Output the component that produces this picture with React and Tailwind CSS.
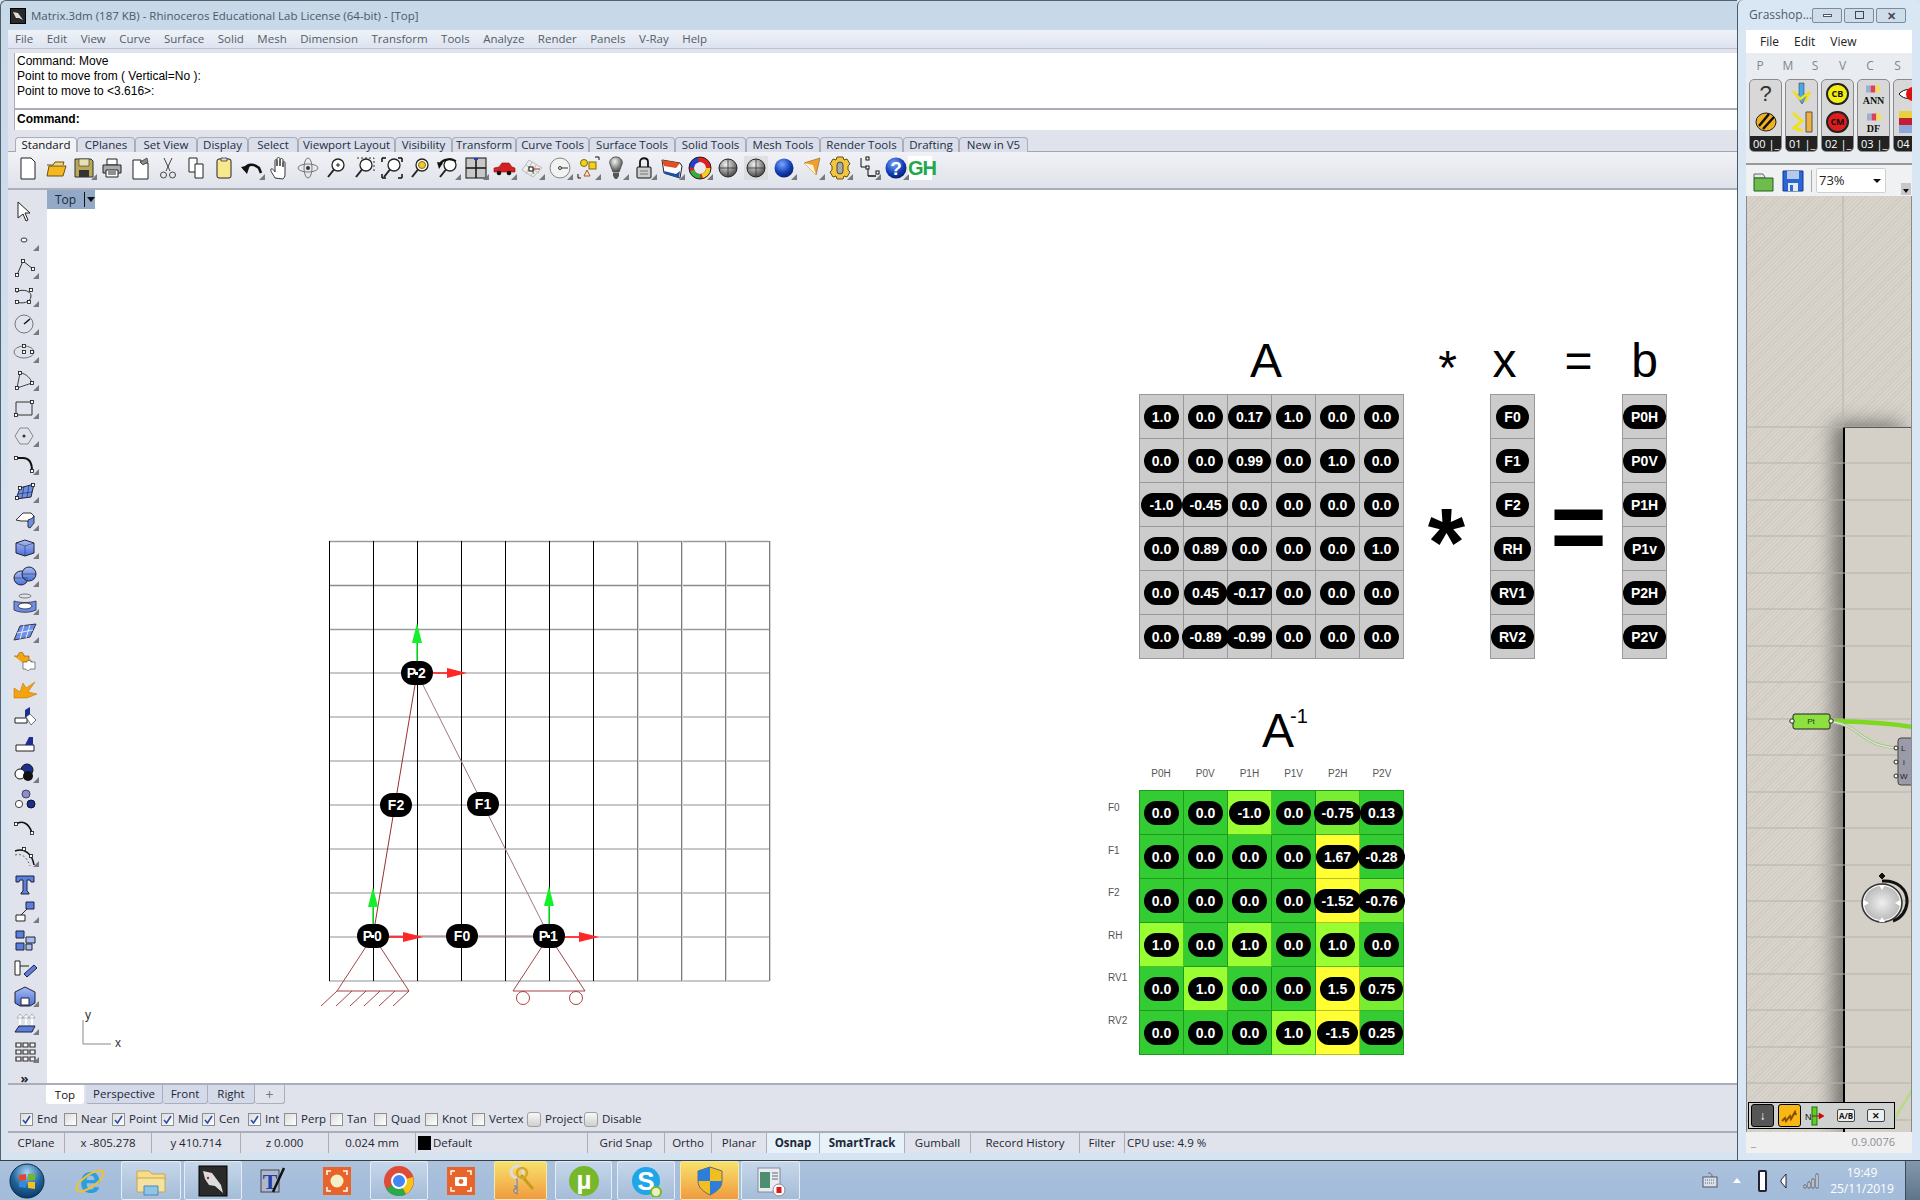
import React from "react";

const S = ({ children, size = 24, vb }) => (
  <svg width={size} height={size} viewBox={vb || `0 0 ${size} ${size}`} className="block shrink-0">
    {children}
  </svg>
);

const Corner = () => (
  <span className="absolute right-[1px] bottom-[3px] w-0 h-0 border-l-[6px] border-l-transparent border-b-[6px] border-b-[#77797d]" />
);

const Defs = () => (
  <svg width="0" height="0" className="absolute">
    <defs>
      <radialGradient id="gray" cx="40%" cy="30%" r="75%">
        <stop offset="0" stopColor="#f4f4f4" />
        <stop offset="1" stopColor="#3d3d3d" />
      </radialGradient>
      <radialGradient id="blue" cx="40%" cy="30%" r="75%">
        <stop offset="0" stopColor="#7ea6ff" />
        <stop offset="0.6" stopColor="#1240b8" />
        <stop offset="1" stopColor="#041a66" />
      </radialGradient>
      <radialGradient id="orb" cx="50%" cy="25%" r="80%">
        <stop offset="0" stopColor="#a8d4f4" />
        <stop offset="0.55" stopColor="#20649c" />
        <stop offset="1" stopColor="#0c3458" />
      </radialGradient>
      <radialGradient id="dial" cx="50%" cy="50%" r="60%">
        <stop offset="0" stopColor="#efefef" />
        <stop offset="1" stopColor="#a9a9a9" />
      </radialGradient>
      <linearGradient id="solid" x1="0" y1="0" x2="0" y2="1">
        <stop offset="0" stopColor="#a9bdf4" />
        <stop offset="1" stopColor="#4a6fd8" />
      </linearGradient>
    </defs>
  </svg>
);

// top toolbar drawings, [icon, has fly-out corner]
const magnifier = (
  <>
    <circle cx="14" cy="9" r="6" fill="#fff" stroke="#222" strokeWidth="1.3" />
    <path d="M10 13.5L4 21" stroke="#222" strokeWidth="2" />
  </>
);
const sphereLines = (
  <>
    <circle cx="12" cy="12" r="9" fill="url(#gray)" stroke="#222" />
    <path d="M3 12h18M12 3v18" stroke="#333" strokeWidth="0.8" />
  </>
);

const topIcons = [
  [<S><path d="M5 2h10l4 4v17H5z" fill="#fff" stroke="#222" /></S>, 0],
  [<S><path d="M3 9h6l2-3h9l-1 3" fill="#f6d76a" stroke="#6d5310" /><path d="M3 20l2-10h17l-3 10z" fill="#f3b81f" stroke="#6d5310" /></S>, 0],
  [<S><path d="M3 3h16l2 2v16H3z" fill="#b8a85a" stroke="#333" /><path d="M7 3h10v7H7z" fill="#e8e0b0" stroke="#333" strokeWidth=".6" /><path d="M7 14h10v7H7z" fill="#333" /></S>, 1],
  [<S><path d="M7 3h10v6H7z" fill="#fff" stroke="#222" /><path d="M3 9h18v8H3z" fill="#aaa" stroke="#222" /><path d="M6 14h12v7H6z" fill="#fff" stroke="#222" /><path d="M8 16h8M8 18h8" stroke="#222" /></S>, 0],
  [<S><path d="M5 4h8v3h7v16H5z" fill="#fff" stroke="#222" /><path d="M12 6l7-4 1 4-5 3z" fill="#888" stroke="#222" strokeWidth=".6" /></S>, 0],
  [<S><path d="M8 2l6 13M16 2l-6 13" stroke="#444" /><circle cx="7.5" cy="19" r="3" fill="none" stroke="#444" /><circle cx="16.5" cy="19" r="3" fill="none" stroke="#444" /></S>, 0],
  [<S><path d="M5 2h8v14H5z" fill="#fff" stroke="#222" /><path d="M11 8h8v14h-8z" fill="#fff" stroke="#222" /></S>, 0],
  [<S><rect x="5" y="3" width="14" height="19" rx="2" fill="#f7e98c" stroke="#222" /><path d="M9 2h6v3H9z" fill="#ddd" stroke="#222" strokeWidth=".7" /></S>, 0],
  [<S><path d="M4 14c3-6 9-7 15-2l2 5" fill="none" stroke="#111" strokeWidth="2.6" /><path d="M1 11l9-2-3 9z" fill="#111" /></S>, 1],
  [<S><path d="M7 22c-2-4-5-7-4-9 2-1 3 2 4 3V5c0-2 2-2 2 0v5-7c0-2 3-2 3 0v7-6c0-2 3-2 3 0v7-4c0-2 2-2 2 0v11c0 3-1 4-2 5z" fill="#fff" stroke="#333" /></S>, 0],
  [<S><ellipse cx="12" cy="12" rx="10" ry="4" fill="none" stroke="#777" /><ellipse cx="12" cy="12" rx="4" ry="10" fill="none" stroke="#777" /><circle cx="12" cy="12" r="2" fill="#333" /></S>, 0],
  [<S>{magnifier}<path d="M12 9h4M14 7v4" stroke="#222" /></S>, 0],
  [<S><path d="M5 2h17v15" fill="none" stroke="#333" strokeDasharray="2 2" />{magnifier}</S>, 0],
  [<S>{magnifier}<path d="M2 2h4M2 2v4M22 2h-4M22 2v4M2 22h4M2 22v-4M22 22h-4M22 22v-4" stroke="#111" strokeWidth="1.5" fill="none" /></S>, 0],
  [<S>{magnifier}<circle cx="14" cy="9" r="3.5" fill="#f0c830" stroke="#8a7010" /></S>, 0],
  [<S>{magnifier}<path d="M3 10c2-6 10-9 17-5" fill="none" stroke="#111" strokeWidth="2" /><path d="M1 6l6 1-4 6z" fill="#111" /></S>, 1],
  [<S><rect x="2" y="2" width="20" height="20" fill="#c8c8c8" stroke="#111" /><path d="M12 2v20M2 12h20" stroke="#111" strokeWidth="1.5" /><path d="M10 2h4v2h-4z" fill="#2040c0" /></S>, 1],
  [<S><path d="M2 16v-4l5-1 3-4h7l3 4 3 1v4z" fill="#d81f1f" stroke="#801010" strokeWidth=".6" /><circle cx="7" cy="17" r="2.3" fill="#111" /><circle cx="17" cy="17" r="2.3" fill="#111" /></S>, 1],
  [<S><path d="M9 4l13 8-9 9L2 14z" fill="#eee" stroke="#bbb" /><path d="M6 9l13 8M12 6l-6 12M16 9l-5 11" stroke="#bbb" /><path d="M12 13h8" stroke="#c02020" /><path d="M12 13l2 5" stroke="#20a030" /><rect x="9" y="11" width="4" height="4" fill="#fff" stroke="#111" /></S>, 1],
  [<S><circle cx="12" cy="12" r="10" fill="#f2f2f2" stroke="#888" /><circle cx="12" cy="12" r="1.5" fill="none" stroke="#333" /><path d="M13 12h7" stroke="#333" /></S>, 1],
  [<S><circle cx="8" cy="7" r="3.5" fill="#f5d020" stroke="#806800" /><rect x="13" y="6" width="7" height="7" fill="#f5d020" stroke="#806800" /><path d="M11 14l3 6H8z" fill="#f8e8d8" stroke="#b05020" /><path d="M2 18v4h3M19 1h4v3" fill="none" stroke="#111" /></S>, 1],
  [<S><path d="M12 1c5 0 7 4 6 7l-3 8H9L6 8c-1-3 1-7 6-7z" fill="url(#gray)" stroke="#555" /><path d="M9 17h6v3l-2 3h-2l-2-3z" fill="#555" /></S>, 1],
  [<S><path d="M8 11V6c0-5 8-5 8 0v5" fill="none" stroke="#111" strokeWidth="1.8" /><rect x="5" y="11" width="14" height="11" rx="1" fill="#ccc" stroke="#111" /><path d="M8 15h8M8 18h8" stroke="#777" /></S>, 1],
  [<S><path d="M2 4l18 3 2 3-2 12-16-5z" fill="#fff" stroke="#223" /><path d="M2 4l18 3-4 5-12-2z" fill="#e05020" /><path d="M4 15l12 3 4-3-1 7-14-4z" fill="#2050a0" /></S>, 1],
  [<S><circle cx="12" cy="12" r="8.5" fill="none" stroke="#e02020" strokeWidth="5" /><circle cx="12" cy="12" r="8.5" fill="none" stroke="#f0d020" strokeWidth="5" strokeDasharray="11 43" /><circle cx="12" cy="12" r="8.5" fill="none" stroke="#30b040" strokeWidth="5" strokeDasharray="11 43" strokeDashoffset="-13" /><circle cx="12" cy="12" r="8.5" fill="none" stroke="#2040d0" strokeWidth="5" strokeDasharray="11 43" strokeDashoffset="-27" /><circle cx="12" cy="12" r="11" fill="none" stroke="#222" /></S>, 1],
  [<S>{sphereLines}</S>, 0],
  [<S><rect x="0" y="0" width="24" height="24" fill="#d6d6d6" opacity=".6" />{sphereLines}</S>, 0],
  [<S><circle cx="12" cy="12" r="9.5" fill="url(#blue)" /></S>, 1],
  [<S><path d="M4 7l16-5-4 17z" fill="#f0a030" stroke="#8a5a10" strokeWidth=".6" /><path d="M4 7l9 2 3 10z" fill="#fff3d0" /></S>, 1],
  [<S><path d="M9 1h6l1 3 3-1 3 5-2 2v4l2 2-3 5-3-1-1 3H9l-1-3-3 1-3-5 2-2v-4L2 8l3-5 3 1z" fill="#f3c640" stroke="#6a5010" /><rect x="9" y="6" width="6" height="12" rx="3" fill="#aaa" stroke="#444" /></S>, 1],
  [<S><path d="M5 2v9M5 11h7v9h8M12 20h8" fill="none" stroke="#111" /><rect x="10" y="1" width="3" height="3" fill="#fff" stroke="#111" /><rect x="10" y="10" width="3" height="3" fill="#fff" stroke="#111" /><rect x="20" y="15" width="3" height="3" fill="#fff" stroke="#111" /></S>, 1],
  [<S><circle cx="12" cy="12" r="10.5" fill="url(#blue)" /><text x="12" y="19" textAnchor="middle" fontSize="19" fontWeight="700" fill="#fff" fontFamily="Liberation Sans">?</text></S>, 1],
];

// left toolbar drawings
const dot = (x, y) => <rect x={x - 1.5} y={y - 1.5} width="3" height="3" fill="#fff" stroke="#111" strokeWidth=".8" />;
const leftIcons = [
  [<S><path d="M5 2l12 11h-5l3 7-2 1-3-7-5 4z" fill="#fff" stroke="#222" /></S>, 0],
  [<S><ellipse cx="11" cy="12" rx="3" ry="2" fill="#fff" stroke="#333" /></S>, 1],
  [<S><path d="M4 19L10 5l10 8" fill="none" stroke="#333" />{dot(4, 19)}{dot(10, 5)}{dot(20, 13)}</S>, 1],
  [<S><path d="M4 9c0-4 14-4 14 3s-10 8-14 6" fill="none" stroke="#333" />{dot(4, 6)}{dot(18, 6)}{dot(4, 18)}{dot(16, 18)}</S>, 1],
  [<S><circle cx="11" cy="12" r="9" fill="none" stroke="#777" /><path d="M11 12l6-5" stroke="#111" strokeWidth="1.5" /></S>, 1],
  [<S><ellipse cx="11" cy="12" rx="10" ry="6" fill="none" stroke="#777" />{dot(11, 6)}{dot(11, 12)}{dot(19, 12)}</S>, 1],
  [<S><path d="M4 20L7 5c6 0 11 6 12 10z" fill="none" stroke="#444" />{dot(4, 20)}{dot(7, 5)}{dot(19, 15)}</S>, 1],
  [<S><path d="M3 6h16v13H3z" fill="none" stroke="#333" />{dot(3, 19)}{dot(19, 6)}</S>, 1],
  [<S><path d="M7 4h8l5 8-5 8H7l-5-8z" fill="none" stroke="#888" /><circle cx="11" cy="12" r="1.5" fill="#333" /></S>, 1],
  [<S><path d="M3 6h7c6 0 9 4 9 13" fill="none" stroke="#111" strokeWidth="2" />{dot(3, 6)}{dot(19, 19)}</S>, 1],
  [<S><path d="M7 8l14-4-3 13-15 2z" fill="#6c8fe8" stroke="#223" /><path d="M5 14l14-2M11 6l-2 12M16 5l-2 12" stroke="#223" strokeWidth=".6" />{dot(4, 18)}{dot(7, 8)}{dot(20, 5)}</S>, 1],
  [<S><path d="M3 12l7-7h8l3 3-4 8-3-3H8z" fill="#fff" stroke="#333" /><path d="M15 12c3-1 5-2 6-4v7l-4 5-2-1z" fill="#6c8fe8" stroke="#333" /></S>, 1],
  [<S><path d="M3 7l9-3 9 3v10l-9 3-9-3z" fill="url(#solid)" stroke="#223" /><path d="M3 7l9 3 9-3M12 10v10" stroke="#223" strokeWidth=".5" fill="none" /></S>, 1],
  [<S><circle cx="8" cy="14" r="7" fill="url(#solid)" stroke="#223" /><circle cx="16" cy="10" r="7" fill="url(#solid)" stroke="#223" /><path d="M1 14h14M9 10h14" stroke="#223" strokeWidth=".5" /></S>, 1],
  [<S><ellipse cx="12" cy="4" rx="6" ry="2" fill="none" stroke="#777" /><path d="M1 9c6 2 16 2 22 0v9c-6 3-16 3-22 0z" fill="#6c8fe8" stroke="#445" /><ellipse cx="12" cy="14" rx="7" ry="3" fill="#fff" stroke="#445" /></S>, 1],
  [<S><path d="M7 6l16-2-6 13-16 3z" fill="#6c8fe8" stroke="#334" /><path d="M4 13l16-3M11 5l-4 14M17 5l-4 13" stroke="#fff" strokeWidth=".8" /></S>, 1],
  [<S><path d="M1 8h4c0-5 6-5 6 0h5v4c4 0 4 5 0 5v3" fill="#f2a516" stroke="#805010" strokeWidth=".6" /><path d="M10 14h4c0-2 4-2 4 0h4v7h-5c0 2-4 2-4 0h-3z" fill="#fff" stroke="#555" strokeWidth=".7" /></S>, 0],
  [<S><path d="M1 22V12l6 4 3-9 3 5 9-6-7 10 9 2-10 4z" fill="#f5a30a" stroke="#b56a00" strokeWidth=".5" /></S>, 0],
  [<S><path d="M2 14h12v5H2z" fill="#fff" stroke="#222" /><path d="M12 6l5-3v8l-5 3z" fill="#1c2f90" /><path d="M13 13l4-3 6 6-5 5z" fill="#fff" stroke="#444" strokeWidth=".7" /></S>, 0],
  [<S><path d="M3 13h18v6H3z" fill="#fff" stroke="#222" /><path d="M12 13l4-8h4v8z" fill="#1c2f90" /></S>, 0],
  [<S><circle cx="14" cy="10" r="6" fill="#1c2f90" stroke="#111" /><circle cx="7" cy="14" r="5" fill="#fff" stroke="#111" /><circle cx="15" cy="16" r="5" fill="#111" /></S>, 1],
  [<S><circle cx="13" cy="6" r="4" fill="#8b8bdc" stroke="#444" /><circle cx="6" cy="16" r="3.6" fill="#fff" stroke="#444" /><circle cx="18" cy="16" r="4" fill="#1c2f90" stroke="#111" /></S>, 0],
  [<S><path d="M3 8c6-4 13-1 16 9" fill="none" stroke="#111" strokeWidth="1.6" />{dot(3, 8)}{dot(19, 17)}</S>, 0],
  [<S><path d="M2 7c9-3 17 2 19 14" fill="none" stroke="#111" strokeWidth="1.5" /><path d="M2 11c7-2 12 2 15 11" fill="none" stroke="#666" strokeDasharray="2 2" />{dot(11, 5)}{dot(18, 12)}</S>, 1],
  [<S><path d="M3 4h18v6h-3l-1-2h-3v11l2 2v1H8v-1l2-2V8H7L6 10H3z" fill="#5a7fe0" stroke="#223" /></S>, 0],
  [<S><path d="M3 15h9v6H3z" fill="#fff" stroke="#222" /><path d="M13 2h8v7h-8z" fill="#5a7fe0" stroke="#223" /><path d="M8 15l6-6" stroke="#222" /></S>, 1],
  [<S><path d="M3 3h8v7H3zM3 15h8v7H3z" fill="#5a7fe0" stroke="#223" /><path d="M13 9h9v6h-9zM13 16h6v6h-6z" fill="#a8bdf0" stroke="#223" /></S>, 0],
  [<S><path d="M2 5h5v14H2z" fill="#fff" stroke="#222" /><path d="M11 18l10-9 3 3-10 9z" fill="#5a7fe0" stroke="#223" /><path d="M7 10h9" stroke="#222" /></S>, 0],
  [<S><path d="M2 8l10-5 10 5v11l-5 3H7l-5-3z" fill="url(#solid)" stroke="#223" /><path d="M8 14h8v7H8z" fill="#fff" stroke="#223" /></S>, 1],
  [<S><path d="M2 20l4-6h16l-3 6z" fill="#5a7fe0" stroke="#223" /><path d="M7 13V4M13 13V4M19 13V4" stroke="#fff" strokeWidth="2" /><path d="M4 6l3-4 3 4zM10 6l3-4 3 4zM16 6l3-4 3 4z" fill="#fff" stroke="#556" strokeWidth=".4" /></S>, 1],
  [<S><path d="M3 3h5v4H3zM10 3h5v4h-5zM17 3h5v4h-5zM3 10h5v4H3zM10 10h5v4h-5zM17 10h5v4h-5zM3 17h5v4H3zM10 17h5v4h-5zM17 17h5v4h-5z" fill="#f0f0f0" stroke="#333" strokeWidth="1.2" /></S>, 1],
];

const menu = ["File", "Edit", "View", "Curve", "Surface", "Solid", "Mesh", "Dimension", "Transform", "Tools", "Analyze", "Render", "Panels", "V-Ray", "Help"];

const tabs = [
  ["Standard", "w-[62px]"], ["CPlanes", "w-[58px]"], ["Set View", "w-[62px]"], ["Display", "w-[51px]"],
  ["Select", "w-[50px]"], ["Viewport Layout", "w-[97px]"], ["Visibility", "w-[57px]"], ["Transform", "w-[64px]"],
  ["Curve Tools", "w-[73px]"], ["Surface Tools", "w-[86px]"], ["Solid Tools", "w-[71px]"], ["Mesh Tools", "w-[74px]"],
  ["Render Tools", "w-[83px]"], ["Drafting", "w-[56px]"], ["New in V5", "w-[69px]"],
];

const snaps = [
  ["End", 1, "w-[44px]"], ["Near", 0, "w-[48px]"], ["Point", 1, "w-[49px]"], ["Mid", 1, "w-[41px]"],
  ["Cen", 1, "w-[46px]"], ["Int", 1, "w-[36px]"], ["Perp", 0, "w-[46px]"], ["Tan", 0, "w-[44px]"],
  ["Quad", 0, "w-[51px]"], ["Knot", 0, "w-[47px]"], ["Vertex", 0, "w-[55px]"],
];

const status = [
  ["CPlane", "w-[57px]", ""], ["x -805.278", "w-[87px]", ""], ["y 410.714", "w-[89px]", ""], ["z 0.000", "w-[88px]", ""],
  ["0.024 mm", "w-[87px]", ""],
];
const status2 = [
  ["Grid Snap", "w-[77px]", ""], ["Ortho", "w-[47px]", ""], ["Planar", "w-[55px]", ""],
  ["Osnap", "w-[53px]", "font-bold bg-[#e6f1fa]"], ["SmartTrack", "w-[85px]", "font-bold bg-[#e6f1fa]"],
  ["Gumball", "w-[66px]", ""], ["Record History", "w-[109px]", ""], ["Filter", "w-[45px]", ""],
];

const matrixA = [
  ["1.0", "0.0", "0.17", "1.0", "0.0", "0.0"],
  ["0.0", "0.0", "0.99", "0.0", "1.0", "0.0"],
  ["-1.0", "-0.45", "0.0", "0.0", "0.0", "0.0"],
  ["0.0", "0.89", "0.0", "0.0", "0.0", "1.0"],
  ["0.0", "0.45", "-0.17", "0.0", "0.0", "0.0"],
  ["0.0", "-0.89", "-0.99", "0.0", "0.0", "0.0"],
];
const colX = ["F0", "F1", "F2", "RH", "RV1", "RV2"];
const colB = ["P0H", "P0V", "P1H", "P1v", "P2H", "P2V"];
const inverse = [
  [["0.0", "g"], ["0.0", "g"], ["-1.0", "l"], ["0.0", "g"], ["-0.75", "m"], ["0.13", "g"]],
  [["0.0", "g"], ["0.0", "g"], ["0.0", "g"], ["0.0", "g"], ["1.67", "y"], ["-0.28", "g"]],
  [["0.0", "g"], ["0.0", "g"], ["0.0", "g"], ["0.0", "g"], ["-1.52", "y"], ["-0.76", "m"]],
  [["1.0", "l"], ["0.0", "g"], ["1.0", "l"], ["0.0", "g"], ["1.0", "l"], ["0.0", "g"]],
  [["0.0", "g"], ["1.0", "l"], ["0.0", "g"], ["0.0", "g"], ["1.5", "y"], ["0.75", "m"]],
  [["0.0", "g"], ["0.0", "g"], ["0.0", "g"], ["1.0", "l"], ["-1.5", "y"], ["0.25", "g"]],
];
const heat = {
  g: "bg-[#33cc33] border-[#1f9a1f]",
  l: "bg-[#99ff33] border-[#55c022]",
  m: "bg-[#77ee33] border-[#44b022]",
  y: "bg-[#ffff33] border-[#b8c020]",
};

const Pill = ({ text }) => (
  <span className="shrink-0 h-[24px] px-2 rounded-full bg-black text-white font-bold text-[14px] leading-[24px] whitespace-nowrap font-['Liberation_Sans',sans-serif]">
    {text}
  </span>
);

const Cell = ({ text, cls = "bg-[#cccccc] border-[#999999]" }) => (
  <div className={`w-11 h-11 flex items-center justify-center border-r border-b ${cls}`}>
    <Pill text={text} />
  </div>
);

const Column = ({ items }) => (
  <div className="w-[45px] border-t border-l border-[#999999]">
    {items.map((t) => (
      <Cell key={t} text={t} />
    ))}
  </div>
);

const Check = ({ on }) => (
  <span className="w-[13px] h-[13px] shrink-0 border border-[#8e8f8f] bg-gradient-to-br from-[#dcdcdc] to-white flex items-center justify-center">
    {on ? (
      <svg width="9" height="9" viewBox="0 0 9 9">
        <path d="M1 5l2.5 3L8 1" fill="none" stroke="#2b4ca8" strokeWidth="1.6" />
      </svg>
    ) : null}
  </span>
);

const Toggle = ({ label, cls }) => (
  <div className={`flex items-center gap-[4px] ${cls}`}>
    <span className="w-[14px] h-[15px] rounded-[3px] border border-[#a0a0a0] bg-gradient-to-b from-[#f8f8f8] to-[#cfcfcf]" />
    {label}
  </div>
);

const Model = () => {
  const vx = [329, 373, 417, 461, 505, 549, 593];
  const vx2 = [637, 681, 725, 769];
  const hy = [673, 717, 761, 805, 849, 893, 937, 981];
  const members = [
    [396, 805, "F2"],
    [483, 804, "F1"],
    [462, 936, "F0"],
  ];
  const points = [
    [417, 673, "P", "2"],
    [373, 936, "P", "0"],
    [549, 936, "P", "1"],
  ];
  const up = [[373, 925, 887], [549, 925, 886], [417, 662, 623]];
  const right = [[383, 937], [559, 937], [427, 673]];
  return (
    <svg width="1690" height="892" viewBox="47 190 1690 892" className="absolute inset-0">
      {hy.map((y) => <path key={y} d={`M329 ${y}H769`} stroke="#b6b6b6" strokeWidth="1.6" />)}
      <path d="M329 541.5H769" stroke="#9a9a9a" strokeWidth="1.5" />
      <path d="M329 585.5H769" stroke="#8c8c8c" strokeWidth="1.5" />
      <path d="M329 629.5H769" stroke="#9a9a9a" strokeWidth="1.5" />
      {vx2.map((x) => (
        <g key={x}>
          <path d={`M${x + 1.5} 541V981`} stroke="#d6d6d6" />
          <path d={`M${x + 0.5} 541V981`} stroke="#7c7c7c" />
        </g>
      ))}
      {vx.map((x) => <path key={x} d={`M${x + 0.5} 541V981`} stroke="#000" />)}
      <path d="M373 936L417 673" stroke="#8b1a1a" strokeWidth=".9" />
      <path d="M417 673L549 936" stroke="#a07878" />
      <path d="M373 936H549" stroke="#a07878" />
      <path d="M373 936L337 991H409ZM337 991l-16 15M352 991l-16 15M366 991l-16 15M380 991l-16 15M395 991l-16 15M409 991l-16 15" fill="none" stroke="#9a3030" strokeWidth=".9" />
      <path d="M549 936L513 991H585Z" fill="none" stroke="#9a3030" strokeWidth=".9" />
      <circle cx="523" cy="998" r="6.5" fill="none" stroke="#b04040" />
      <circle cx="576" cy="998" r="6.5" fill="none" stroke="#b04040" />
      {up.map(([x, a, b]) => (
        <g key={x}>
          <path d={`M${x} ${a}V${b + 15}`} stroke="#22f03a" strokeWidth="1.6" />
          <path d={`M${x} ${b}l5 20h-10z`} fill="#14f02c" />
        </g>
      ))}
      {right.map(([x, y]) => (
        <g key={x}>
          <path d={`M${x} ${y}h25`} stroke="#ff2020" strokeWidth="1.6" />
          <path d={`M${x + 40} ${y}l-20 -5v10z`} fill="#ff2626" />
        </g>
      ))}
      {members.map(([x, y, t]) => (
        <g key={t}>
          <rect x={x - 16} y={y - 12} width="32" height="24" rx="12" fill="#000" />
          <text x={x} y={y + 5} textAnchor="middle" fontSize="14" fontWeight="700" fill="#fff" fontFamily="Liberation Sans">{t}</text>
        </g>
      ))}
      {points.map(([x, y, a, b]) => (
        <g key={b}>
          <rect x={x - 16} y={y - 12} width="32" height="24" rx="12" fill="#000" />
          <text x={x - 1} y={y + 5} textAnchor="end" fontSize="14" fontWeight="700" fill="#fff" fontFamily="Liberation Sans">{a}</text>
          <text x={x + 1} y={y + 5} textAnchor="start" fontSize="14" fontWeight="700" fill="#fff" fontFamily="Liberation Sans">{b}</text>
          <rect x={x - 2} y={y - 1} width="3" height="3" fill="#fff" />
        </g>
      ))}
      <path d="M83 1020V1044H111" fill="none" stroke="#888" />
      <text x="85" y="1019" fontSize="12" fill="#333" fontFamily="Liberation Sans">y</text>
      <text x="115" y="1047" fontSize="12" fill="#333" fontFamily="Liberation Sans">x</text>
    </svg>
  );
};

const Viewport = () => (
  <div className="relative flex-1 bg-white overflow-hidden font-['Liberation_Sans',sans-serif] text-black">
    <div className="absolute left-0 top-0 w-[48px] h-[19px] bg-[#92a9c7] flex items-center pl-[8px] text-[12px] text-[#1c2a3c] font-['Open_Sans',sans-serif]">
      <span className="w-[29px]">Top</span>
      <span className="h-[15px] border-l border-[#111] pl-[2px] flex items-center">
        <span className="w-0 h-0 border-x-[4px] border-x-transparent border-t-[5px] border-t-[#111]" />
      </span>
    </div>
    <Model />

    <div className="absolute left-[1092px] top-[147px] grid grid-cols-[264px_87px_45px_87px_45px]">
      <div className="h-[57px] text-[48px] leading-[48px] text-center pr-[10px]">A</div>
      <div className="h-[57px] text-[48px] leading-[48px] text-center pt-[7px] pl-[2px]">*</div>
      <div className="h-[57px] text-[48px] leading-[48px] text-center pr-[16px]">x</div>
      <div className="h-[57px] text-[48px] leading-[48px] text-center">=</div>
      <div className="h-[57px] text-[48px] leading-[48px] text-center">b</div>

      <div className="w-[265px] border-t border-l border-[#999999] grid grid-cols-6">
        {matrixA.flat().map((v, i) => (
          <Cell key={i} text={v} />
        ))}
      </div>
      <div className="flex items-center justify-center font-bold text-[96px] leading-none pt-[30px]">*</div>
      <Column items={colX} />
      <div className="flex items-center justify-center font-bold text-[96px] leading-none">=</div>
      <Column items={colB} />
    </div>

    <div className="absolute left-[1061px] top-[517px] flex">
      <div className="w-[31px] pt-[80px] text-[10px] text-[#555]">
        {colX.map((t) => (
          <div key={t} className="h-[42.6px] leading-[42.6px]">{t}</div>
        ))}
      </div>
      <div className="w-[265px]">
        <div className="h-[48px] text-[48px] leading-[48px] pl-[123px] flex">
          A<span className="text-[20px] leading-[20px] -mt-[1px] -ml-[4px]">-1</span>
        </div>
        <div className="mt-[11px] h-[24px] grid grid-cols-6 text-[10px] text-[#555] text-center">
          {colB.map((t) => (
            <span key={t}>{t === "P1v" ? "P1V" : t}</span>
          ))}
        </div>
        <div className="border-t border-l border-[#1f9a1f] grid grid-cols-6">
          {inverse.flat().map(([v, c], i) => (
            <Cell key={i} text={v} cls={heat[c]} />
          ))}
        </div>
      </div>
    </div>
  </div>
);

const palette = [
  [
    <span className="text-[22px] leading-none text-[#333] font-['Liberation_Sans',sans-serif]">?</span>,
    <S size={22}><ellipse cx="11" cy="11" rx="10" ry="9" fill="#f0b020" stroke="#222" /><path d="M4 15l10-12M8 18L19 6" stroke="#111" strokeWidth="2.5" /></S>,
    "00 |_",
  ],
  [
    <S size={24}><path d="M9 1h5v12h4l-6 9-6-9h3z" fill="#48a8e8" stroke="#333" strokeWidth=".5" /><path d="M3 9l7 8 10-7-5 10" fill="none" stroke="#f0e020" strokeWidth="2.5" /></S>,
    <S size={24}><path d="M16 2h6v20h-6z" fill="#f0b040" stroke="#555" /><path d="M3 3l9 8-8 7 9 3" fill="none" stroke="#f0e020" strokeWidth="3" /></S>,
    "01 |_",
  ],
  [
    <span className="w-[23px] h-[22px] rounded-full bg-[#f4ee10] border-2 border-[#222] text-[9px] font-bold leading-[18px] text-center text-[#111]">CB</span>,
    <span className="w-[23px] h-[22px] rounded-full bg-[#e01c1c] border-2 border-[#222] text-[9px] font-bold leading-[18px] text-center text-[#111]">CM</span>,
    "02 |_",
  ],
  [
    <div className="flex flex-col items-center leading-none">
      <S size={14} vb="0 0 24 12"><path d="M0 0h8v12H0z" fill="#9ab0d8" /><path d="M8 0h8v12H8z" fill="#e04060" /><path d="M16 0h8v12h-8z" fill="#f0e060" /></S>
      <span className="text-[10px] font-bold font-['Liberation_Serif',serif] text-[#111]">ANN</span>
    </div>,
    <div className="flex flex-col items-center leading-none">
      <S size={14} vb="0 0 24 12"><path d="M0 0h8v12H0z" fill="#9ab0d8" /><path d="M8 0h8v12H8z" fill="#e04060" /><path d="M16 0h8v12h-8z" fill="#f0e060" /></S>
      <span className="text-[10px] font-bold font-['Liberation_Serif',serif] text-[#111]">DF</span>
    </div>,
    "03 |_",
  ],
  [
    <S size={24}><path d="M1 12c5-6 14-6 20 0-6 6-15 6-20 0z" fill="#fff" stroke="#111" /><circle cx="15" cy="12" r="7" fill="#e01010" /></S>,
    <S size={24}><path d="M1 1h22v7H1z" fill="#e8d040" /><path d="M1 8h22v7H1z" fill="#c02030" /><path d="M1 15h22v8H1z" fill="#90a8d8" /></S>,
    "04",
  ],
];

const Grasshopper = () => (
  <div className="w-[183px] h-full flex flex-col bg-[#d9e6f3] border-l border-[#4d5a66] rounded-t-[6px] pl-[8px] pr-[8px] font-['Open_Sans',sans-serif]">
    <div className="h-[30px] flex items-center shrink-0">
      <span className="text-[12px] text-[#4e5d6c] w-[66px] shrink-0 pl-[3px] whitespace-nowrap">Grasshop...</span>
      <div className="flex gap-[2px] shrink-0">
        <span className="w-[30px] h-[15px] shrink-0 rounded-[2px] border border-[#7d8b99] bg-[#cfdcea] flex items-center justify-center"><span className="w-[9px] h-[3px] border border-[#556] bg-white" /></span>
        <span className="w-[30px] h-[15px] shrink-0 rounded-[2px] border border-[#7d8b99] bg-[#cfdcea] flex items-center justify-center"><span className="w-[9px] h-[8px] border-[1.5px] border-[#445]" /></span>
        <span className="w-[30px] h-[15px] shrink-0 rounded-[2px] border border-[#7d8b99] bg-[#cfdcea] flex items-center justify-center text-[11px] font-bold leading-none text-[#445]">✕</span>
      </div>
    </div>
    <div className="h-[23px] shrink-0 bg-white flex items-center text-[12px] text-[#222] pl-[14px] gap-[15px]">
      <span>File</span>
      <span>Edit</span>
      <span>View</span>
    </div>
    <div className="h-[107px] shrink-0 bg-[#e9edf2] overflow-hidden">
      <div className="h-[26px] flex items-center text-[12px] text-[#7d8790] pl-[9px] gap-[17.5px]">
        {["P", "M", "S", "V", "C", "S"].map((t, i) => (
          <span key={i} className="w-[10px] text-center">{t}</span>
        ))}
      </div>
      <div className="flex gap-[3px] pl-[3px]">
        {palette.map((p, i) => (
          <div key={i} className="w-[33px] h-[73px] shrink-0 rounded-[5px] border border-[#8a8a8a] bg-[#d8d8d8] flex flex-col overflow-hidden">
            <div className="h-[28px] flex items-center justify-center">{p[0]}</div>
            <div className="h-[28px] flex items-center justify-center">{p[1]}</div>
            <div className="h-[15px] bg-[#222] text-white text-[11px] leading-[15px] pl-[3px] whitespace-nowrap">{p[2]}</div>
          </div>
        ))}
      </div>
    </div>
    <div className="h-[3px] shrink-0 bg-[#e9edf2]" />
    <div className="h-[33px] shrink-0 bg-[#f0f1f3] border-t-2 border-[#9a9a9a] flex items-center pl-[6px] relative">
      <S size={22}><path d="M2 4h9l2 3v1H2z" fill="#e8e8e8" stroke="#666" /><path d="M2 8h19v13H2z" fill="#6fbb4c" stroke="#206020" /></S>
      <span className="ml-[8px]"><S size={22}><path d="M1 1h20v20H1z" fill="#2a66d8" stroke="#123b8a" /><path d="M5 1h12v8H5z" fill="#b8c8e8" /><path d="M6 13h10v8H6z" fill="#e8e8e8" /><path d="M8 15h3v6H8z" fill="#2a66d8" /></S></span>
      <span className="ml-[7px] h-[22px] border-l border-[#aaa]" />
      <div className="ml-[4px] w-[70px] h-[25px] bg-white border border-[#d0d0d0] rounded-[2px] flex items-center justify-between px-[2px] pr-[4px] text-[13px] text-[#222]">
        73%
        <span className="w-0 h-0 border-x-[4px] border-x-transparent border-t-[4px] border-t-[#111]" />
      </div>
      <span className="absolute right-[1px] bottom-[1px] w-[10px] h-[12px] bg-[#c8c8c8] flex items-end justify-center pb-[2px]">
        <span className="w-0 h-0 border-x-[3px] border-x-transparent border-t-[4px] border-t-[#111]" />
      </span>
    </div>
    <div className="relative flex-1 overflow-hidden border-x border-[#8a8a8a] bg-[#d4d0c8] bg-[repeating-linear-gradient(135deg,#cfcbc3_0px,#cfcbc3_1px,#d8d4cc_1px,#d8d4cc_3px)]">
      <div className="absolute left-[96px] top-[231px] right-0 bottom-0 bg-[#d4d0c8] border-l-2 border-t border-black shadow-[-10px_-4px_18px_rgba(0,0,0,0.45)]" />
      <svg width="165" height="936" viewBox="1746 196 165 936" className="absolute inset-0">
        {[427, 463, 500, 536, 573, 609, 646, 682, 719, 755, 792, 828, 865, 901, 937, 974, 1010, 1047, 1083, 1120].map((y) => (
          <path key={y} d={`M1746 ${y}H1911`} stroke="#b5b2a9" />
        ))}
        <path d="M1842 196V427" stroke="#b5b2a9" />
        <path d="M1894 1118L1911 1090" stroke="#b9d98c" strokeWidth="3" fill="none" />
        <path d="M1830 721C1860 722 1885 722 1911 727" stroke="#7fd820" strokeWidth="4.5" fill="none" />
        <path d="M1832 722C1860 726 1860 746 1896 748" stroke="#a8c890" strokeWidth="3" fill="none" />
        <path d="M1832 722C1860 726 1860 746 1896 748" stroke="#e8efe0" strokeWidth="1" fill="none" />
        <rect x="1792" y="714" width="37" height="15" rx="2" fill="#8ee040" stroke="#222" />
        <circle cx="1791" cy="721" r="2.2" fill="#fff" stroke="#222" />
        <circle cx="1830" cy="721" r="2.2" fill="#fff" stroke="#222" />
        <text x="1810" y="724" textAnchor="middle" fontSize="8" fill="#224010" fontFamily="Liberation Sans">Pt</text>
        <rect x="1897" y="738" width="20" height="47" rx="3" fill="#9a9aa8" stroke="#444" />
        <circle cx="1895" cy="748" r="2" fill="#fff" stroke="#222" />
        <circle cx="1895" cy="762" r="2" fill="#fff" stroke="#222" />
        <circle cx="1895" cy="776" r="2" fill="#fff" stroke="#222" />
        <text x="1900" y="751" fontSize="8" fill="#222" fontFamily="Liberation Sans">L</text>
        <text x="1902" y="765" fontSize="8" fill="#222" fontFamily="Liberation Sans">i</text>
        <text x="1899" y="779" fontSize="8" fill="#222" fontFamily="Liberation Sans">W</text>
        <path d="M1881 873l3 3-3 3-3-3z" fill="#111" stroke="#111" />
        <path d="M1881 881c15-1 26 8 25 22-1 8-6 15-14 18" fill="none" stroke="#111" strokeWidth="3" />
        <ellipse cx="1881" cy="903" rx="20" ry="19" fill="url(#dial)" stroke="#333" strokeWidth="1.5" />
        <ellipse cx="1881" cy="903" rx="18.5" ry="17.5" fill="none" stroke="#fff" strokeWidth="1" />
        <path d="M1881 890l-3-5h6zM1881 917l-3 5h6zM1868 903l-5-3v6zM1894 903l5-3v6z" fill="#fff" />
      </svg>
      <div className="absolute left-[1px] bottom-[3px] w-[147px] h-[27px] bg-[#d0d1d1] border border-black flex items-center gap-[3px] px-[2px]">
        <span className="w-[23px] h-[23px] rounded-[3px] bg-[#555] border border-black flex items-center justify-center text-white text-[12px] leading-none font-bold">↓</span>
        <span className="w-[23px] h-[23px] ml-[1px] rounded-[3px] bg-[#f7b715] border border-black flex items-center justify-center">
          <svg width="18" height="14" viewBox="0 0 18 14"><path d="M1 12l3-3 1 3 4-5 1 3 4-7 1 3" fill="none" stroke="#8a4b00" strokeWidth="2" /></svg>
        </span>
        <span className="w-[22px] flex items-center justify-center">
          <svg width="20" height="20" viewBox="0 0 20 20"><text x="0" y="14" fontSize="9" fontFamily="Liberation Sans" fill="#111">N</text><rect x="7" y="1" width="5" height="18" fill="#5cd01e" stroke="#207010" /><path d="M7 10h7v-3l5 3-5 3v-3z" fill="#e00000" stroke="#900" strokeWidth=".5" /></svg>
        </span>
        <span className="w-[18px] h-[13px] ml-[8px] rounded-[2px] border border-[#444] bg-[#eee] text-[8px] font-bold text-[#111] leading-[12px] text-center">A/B</span>
        <span className="w-[18px] h-[13px] ml-[9px] rounded-[2px] border border-[#444] bg-[#eee] text-[9px] font-bold text-[#111] leading-[12px] text-center">✕</span>
      </div>
    </div>
    <div className="h-[21px] shrink-0 bg-[#f0f0f0] flex items-center justify-between pl-[5px] pr-[4px] text-[11px] text-[#8b8f94]">
      <span>_</span>
      <span className="pr-[13px]">0.9.0076</span>
    </div>
    <div className="h-[7px] shrink-0" />
  </div>
);

const tray = (
  <div className="flex items-center text-white ml-auto">
    <span className="w-[16px] h-[17px] mr-[15px]">
      <S size={16}><path d="M6 1c4 0 4 2 4 4" fill="none" stroke="#667" /><rect x="1" y="5" width="14" height="10" fill="#d8e0e8" stroke="#556" /><path d="M3 8h10M3 11h10" stroke="#667" strokeDasharray="1 1" /></S>
    </span>
    <span className="w-0 h-0 border-x-[4px] border-x-transparent border-b-[5px] border-b-white mr-[17px]" />
    <span className="w-[9px] h-[22px] rounded-[2px] border-2 border-[#223] bg-white mr-[7px]" />
    <S size={20}><path d="M12 3L7 9v2l5 6z" fill="#fff" stroke="#223" /></S>
    <span className="ml-[7px] mr-[7px]">
      <S size={20}><path d="M3 17h2v-3H3zM7 17h2v-6H7zM11 17h2V8h-2zM15 17h2V3h-2z" fill="#fff" stroke="#223" strokeWidth=".6" /></S>
    </span>
    <div className="w-[68px] text-center text-[12px] leading-[16px] text-white font-['Open_Sans',sans-serif]">
      <div>19:49</div>
      <div>25/11/2019</div>
    </div>
    <span className="ml-[9px] w-[15px] h-[40px] bg-gradient-to-b from-[#8398ad] to-[#5e7489] border-l border-[#3d4a57]" />
  </div>
);

const task = [
  ["w-[54px]", 0, <S size={38}><circle cx="19" cy="19" r="17" fill="url(#orb)" stroke="#0a2a48" /><path d="M11 13l7-1v6l-7 1z" fill="#e8452c" /><path d="M20 12l7-1v7h-7z" fill="#72b72e" /><path d="M11 20l7-1v7l-7-1z" fill="#2d8be0" /><path d="M20 20h7v7l-7-1z" fill="#f4c020" /></S>],
  ["ml-[7px] w-[58px]", 0, <S size={34}><text x="17" y="29" textAnchor="middle" fontSize="38" fontWeight="700" fill="#2a9fe0" fontFamily="Liberation Sans">e</text><ellipse cx="17" cy="17" rx="16" ry="6" transform="rotate(-35 17 17)" fill="none" stroke="#f0c030" strokeWidth="2" /></S>],
  ["ml-[2px] w-[60px]", 1, <S size={32}><path d="M2 6h12l3 3h13v6H2z" fill="#f6dc8c" stroke="#c8a848" /><path d="M2 13h28v14H2z" fill="#f4e2a0" stroke="#c8a848" /><path d="M9 21h14v9H9z" fill="#8ec4e8" stroke="#4a88b8" /></S>],
  ["ml-[3px] w-[58px]", 1, <S size={32}><rect x="2" y="1" width="28" height="30" fill="#2a2a2a" stroke="#000" /><path d="M6 6l9 2 9 12 2 8-8-7-6-1-4-6z" fill="#dcdcdc" /><circle cx="11" cy="13" r="1.2" fill="#c02020" /></S>],
  ["ml-[1px] w-[57px]", 0, <S size={32}><rect x="5" y="5" width="18" height="22" fill="#b0b8c8" stroke="#445" /><text x="14" y="24" textAnchor="middle" fontSize="22" fontWeight="700" fill="#2040b0" fontFamily="Liberation Serif">T</text><path d="M28 3L17 27" stroke="#111" strokeWidth="2.5" /></S>],
  ["ml-[8px] w-[58px]", 0, <S size={32}><rect x="2" y="2" width="28" height="28" fill="#e8642a" /><circle cx="16" cy="16" r="6.5" fill="#f2f0c8" /><path d="M6 10V6h4M26 10V6h-4M6 22v4h4M26 22v4h-4" fill="none" stroke="#fff" strokeWidth="1.5" /></S>],
  ["ml-[4px] w-[58px]", 1, <S size={34}><circle cx="17" cy="17" r="15" fill="#dd4b39" /><path d="M17 17L4 25a15 15 0 0 0 13 7c3 0 5 0 7-2z" fill="#2ea84f" /><path d="M17 17l14-4a15 15 0 0 1-7 17z" fill="#f7c518" /><circle cx="17" cy="17" r="7" fill="#4285f4" stroke="#fff" strokeWidth="2" /></S>],
  ["ml-[4px] w-[58px]", 0, <S size={32}><rect x="2" y="2" width="28" height="28" fill="#e8642a" /><path d="M6 10V6h4M26 10V6h-4M6 22v4h4M26 22v4h-4" fill="none" stroke="#fff" strokeWidth="1.5" /><rect x="10" y="12" width="12" height="9" rx="1" fill="#fff" /><circle cx="16" cy="16.5" r="2.4" fill="#e8642a" /></S>],
  ["ml-[4px] w-[53px]", 2, <S size={34}><circle cx="13" cy="8" r="6" fill="none" stroke="#ddd" strokeWidth="3" /><path d="M13 14v16l-3-2v-3h2v-3h-2" fill="#ccc" stroke="#777" /><path d="M17 11l12 14" stroke="#c99a1a" strokeWidth="3" /><circle cx="18" cy="9" r="5" fill="none" stroke="#d4a82a" strokeWidth="2.5" /></S>],
  ["ml-[8px] w-[57px]", 1, <S size={32}><circle cx="16" cy="16" r="15" fill="#77b82a" /><text x="16" y="24" textAnchor="middle" fontSize="26" fontWeight="700" fill="#fff" fontFamily="Liberation Sans">µ</text></S>],
  ["ml-[5px] w-[58px]", 1, <S size={32}><circle cx="16" cy="16" r="14" fill="#1fa5e8" /><text x="16" y="25" textAnchor="middle" fontSize="26" fontWeight="700" fill="#fff" fontFamily="Liberation Sans">S</text><circle cx="26" cy="27" r="5" fill="#e8f0c0" stroke="#7ab82a" strokeWidth="2" /></S>],
  ["ml-[5px] w-[59px]", 2, <S size={32}><path d="M16 2l12 4v10c0 7-6 11-12 14C10 27 4 23 4 16V6z" fill="#f0c020" stroke="#667" /><path d="M16 2v14H4V6zM16 16h12c0 7-6 11-12 14z" fill="#2e7dd8" /></S>],
  ["ml-[2px] w-[59px]", 1, <S size={32}><rect x="3" y="3" width="22" height="24" fill="#e8ecf0" stroke="#889" /><path d="M5 7h10v16H5z" fill="#4c8f70" /><path d="M17 8h6M17 11h6M17 14h6" stroke="#667" /><circle cx="24" cy="25" r="6" fill="#fff" stroke="#889" /><rect x="21.5" y="22" width="5" height="6" fill="#e01818" /></S>],
];

const Taskbar = () => (
  <div className="h-[40px] shrink-0 flex items-stretch bg-gradient-to-b from-[#adc3dc] via-[#a6bedb] to-[#a3bcd9] border-t border-[#3a3f44]">
    {task.map(([cls, kind, icon], i) => (
      <div
        key={i}
        className={`${cls} flex items-center justify-center shrink-0 ${
          kind === 1
            ? "rounded-[2px] border border-[#e4edf6] bg-gradient-to-b from-[#c6d7ea] to-[#a4bcd8]"
            : kind === 2
            ? "rounded-[2px] border border-[#f4e8b0] bg-gradient-to-b from-[#f6e26a] to-[#f09a40]"
            : ""
        }`}
      >
        {icon}
      </div>
    ))}
    {tray}
  </div>
);

export default function App() {
  return (
    <div className="w-[1920px] h-[1200px] flex flex-col overflow-hidden bg-[#d6e4f2] text-[#1d2733] font-['Open_Sans',sans-serif] text-[11.5px]">
      <Defs />
      <div className="flex h-[1160px]">
        <div className="w-[1737px] h-full flex flex-col bg-gradient-to-b from-[#c7d8e9] via-[#d6e4f2] to-[#d6e4f2] border-l border-t border-[#56616b] rounded-tl-[6px]">
          <div className="h-[29px] shrink-0 flex items-center pl-[9px] text-[11.5px] text-[#4a5866]">
            <span className="w-[16px] h-[16px] bg-[#2a2a2a] border border-black mr-[5px] flex items-center justify-center">
              <svg width="14" height="14" viewBox="0 0 14 14"><path d="M2 3l5 1 5 7-4-2-3 0z" fill="#ddd" /></svg>
            </span>
            Matrix.3dm (187 KB) - Rhinoceros Educational Lab License (64-bit) - [Top]
          </div>
          <div className="flex-1 ml-[7px] mb-[7px] flex flex-col bg-[#e0e3ec] min-h-0">
            <div className="h-[19px] shrink-0 flex items-center bg-gradient-to-b from-[#eff2f8] to-[#dde4f0] border-b border-[#bcc2cc] pl-[7px] gap-[13.5px] text-[#555c66]">
              {menu.map((m) => (
                <span key={m}>{m}</span>
              ))}
            </div>
            <div className="h-[4px] shrink-0" />
            <div className="h-[77px] shrink-0 ml-[6px] bg-white border-l border-[#a8adb6] flex flex-col font-['Liberation_Sans',sans-serif] text-[12px] text-black">
              <div className="h-[57px] pl-[2px] pt-[1px] leading-[15px] border-b-2 border-[#a8adb6]">
                <div>Command: Move</div>
                <div>Point to move from ( Vertical=No ):</div>
                <div>Point to move to &lt;3.616&gt;:</div>
              </div>
              <div className="flex-1 pl-[2px] pb-[2px] flex items-center font-bold">Command:</div>
            </div>
            <div className="h-[7px] shrink-0" />
            <div className="h-[15px] shrink-0 flex pl-[7px] border-b border-[#a0a6b0] relative">
              {tabs.map(([t, w], i) => (
                <div
                  key={t}
                  className={`${w} h-[15px] flex items-center justify-center whitespace-nowrap rounded-t-[4px] border-t border-r border-l border-[#a9aeb8] ${
                    i === 0 ? "bg-[#f1f2f6] text-[#111]" : "bg-[#d9deea] text-[#1e2d42]"
                  }`}
                >
                  {t}
                </div>
              ))}
            </div>
            <div className="h-[38px] shrink-0 flex items-start pt-[1px] bg-gradient-to-b from-[#f1f2f6] to-[#dfe2ea] border-b-2 border-[#a9aeb8] pl-[6px]">
              {topIcons.map(([ic, m], i) => (
                <div key={i} className="relative w-[28px] h-[30px] shrink-0 flex items-center justify-center">
                  {ic}
                  {m ? <Corner /> : null}
                </div>
              ))}
              <span className="w-[24px] h-[24px] mt-[3px] -ml-[2px] bg-white text-[#22a84a] text-[20px] leading-[24px] font-bold text-center tracking-[-1px] font-['Liberation_Sans',sans-serif]">GH</span>
            </div>
            <div className="flex-1 flex min-h-0">
              <div className="w-[39px] shrink-0 flex flex-col items-center pt-[8px] pr-[6px]">
                {leftIcons.map(([ic, m], i) => (
                  <div key={i} className="relative w-[30px] h-[28px] shrink-0 flex items-center justify-center">
                    {ic}
                    {m ? <Corner /> : null}
                  </div>
                ))}
                <span className="mt-[6px] text-[13px] font-bold text-[#222] leading-none">»</span>
              </div>
              <Viewport />
            </div>
            <div className="h-[21px] shrink-0 border-t-2 border-[#a9aeb8] flex pl-[38px]">
              <div className="w-[38px] bg-white rounded-b-[3px] flex items-center justify-center text-[#111]">Top</div>
              <div className="w-[77px] ml-[2px] bg-[#d5daea] rounded-b-[3px] border-b border-r border-[#a9aeb8] flex items-center justify-center">Perspective</div>
              <div className="w-[45px] bg-[#d5daea] rounded-b-[3px] border-b border-r border-[#a9aeb8] flex items-center justify-center">Front</div>
              <div className="w-[47px] bg-[#d5daea] rounded-b-[3px] border-b border-r border-[#a9aeb8] flex items-center justify-center">Right</div>
              <div className="w-[30px] rounded-b-[3px] border-b border-r border-[#a9aeb8] flex items-center justify-center text-[#777] text-[14px]">+</div>
            </div>
            <div className="h-[29px] shrink-0 flex items-center pl-[12px] pt-[3px] border-b-2 border-[#a9aeb8]">
              {snaps.map(([t, on, w]) => (
                <div key={t} className={`${w} flex items-center gap-[4px]`}>
                  <Check on={on} />
                  {t}
                </div>
              ))}
              <Toggle label="Project" cls="w-[57px]" />
              <Toggle label="Disable" cls="" />
            </div>
            <div className="h-[20px] shrink-0 flex items-center">
              {status.map(([t, w, c]) => (
                <div key={t} className={`${w} h-full flex items-center justify-center border-r border-[#a9aeb8] ${c}`}>{t}</div>
              ))}
              <div className="w-[172px] h-full flex items-center border-r border-[#a9aeb8] pl-[2px] gap-[2px]">
                <span className="w-[13px] h-[14px] bg-black" />
                Default
              </div>
              {status2.map(([t, w, c]) => (
                <div key={t} className={`${w} h-full flex items-center justify-center border-r border-[#a9aeb8] ${c}`}>{t}</div>
              ))}
              <span className="pl-[2px]">CPU use: 4.9 %</span>
            </div>
          </div>
        </div>
        <Grasshopper />
      </div>
      <Taskbar />
    </div>
  );
}
